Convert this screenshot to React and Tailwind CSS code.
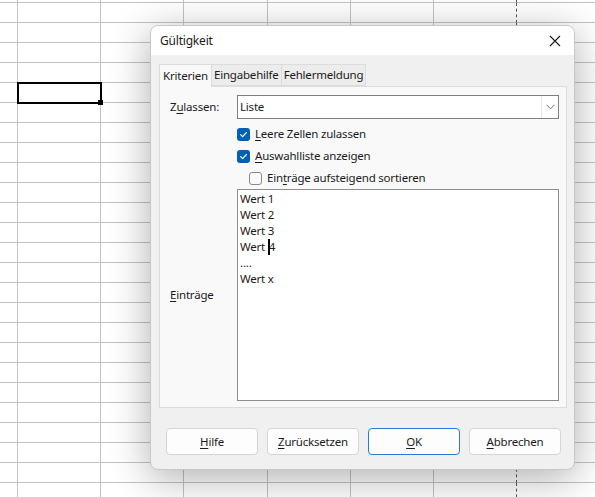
import React from "react";

const COLS = ["w-[18px]", "w-[83px]", "w-[83px]", "w-[84px]", "w-[83px]", "w-[83px]", "w-[83px]", "w-[78px]"];
const ROWS = Array.from({ length: 26 }, (_, i) => i);

function Sheet() {
  return (
    <div className="flex flex-col">
      {ROWS.map((r) => (
        <div key={r} className={"flex shrink-0 " + (r === 0 ? "h-[3px]" : "h-5")}>
          {COLS.map((w, c) => (
            <div
              key={c}
              className={
                w +
                " shrink-0 border-b border-[#c3c3c3] " +
                (c < 6 ? "border-r " : "") +
                (c === 6 ? "border-r border-r-[#555] [border-right-style:dashed] " : "") +
                (r === 5 && c === 1 ? "relative" : "")
              }
            >
              {r === 5 && c === 1 && (
                <>
                  <div className="absolute -left-px -top-px w-[85px] h-[22px] border-2 border-black" />
                  <div className="absolute -right-[3px] -bottom-[3px] w-[5px] h-[5px] bg-black" />
                </>
              )}
            </div>
          ))}
        </div>
      ))}
    </div>
  );
}

function U({ children }) {
  return <span className="underline underline-offset-2">{children}</span>;
}

function Check({ checked }) {
  return checked ? (
    <span className="w-[13px] h-[13px] rounded-[3px] bg-[#005fb8] flex items-center justify-center shrink-0">
      <svg width="9" height="9" viewBox="0 0 10 10" fill="none">
        <path d="M1.8 5.2 L4 7.3 L8.3 2.8" stroke="white" strokeWidth="1.3" strokeLinecap="round" strokeLinejoin="round" />
      </svg>
    </span>
  ) : (
    <span className="w-[13px] h-[13px] rounded-[3px] border border-[#8a8a8a] bg-[#fbfbfb] shrink-0" />
  );
}

function Btn({ children, primary }) {
  return (
    <div
      className={
        "w-[92px] h-[27px] rounded-[4px] flex items-center justify-center bg-[#fdfdfd] border " +
        (primary ? "border-[#2b7bd0]" : "border-[#d5d5d5]")
      }
    >
      {children}
    </div>
  );
}

function Dialog() {
  return (
    <div className="absolute left-[150px] top-[25px] w-[425px] h-[445px] rounded-lg border border-[#c8c8c8] bg-[#f0f0f0] shadow-[0_8px_40px_rgba(0,0,0,0.32)] overflow-hidden flex flex-col">
      <div className="h-[29px] bg-white flex items-center justify-between pl-[9px] pr-[13px] shrink-0">
        <span className="text-[12px]">Gültigkeit</span>
        <svg width="12" height="12" viewBox="0 0 12 12" fill="none">
          <path d="M1 1 L11 11 M11 1 L1 11" stroke="#1b1b1b" strokeWidth="1.1" />
        </svg>
      </div>
      <div className="flex flex-col pl-[8px] pr-[7px] pt-[9px] flex-1">
        <div className="flex h-[22px] items-stretch">
          <div className="px-[3px] flex items-center bg-[#f9f9f9] border border-b-0 border-[#dcdcdc] relative z-10 -mb-px">Kriterien</div>
          <div className="px-[2px] flex items-center bg-[#ececec] border border-l-0 border-[#dcdcdc]">Eingabehilfe</div>
          <div className="px-[2px] flex items-center bg-[#ececec] border border-l-0 border-[#dcdcdc]">Fehlermeldung</div>
        </div>
        <div className="w-[408px] h-[322px] bg-[#f9f9f9] border border-[#dcdcdc] pl-[10px] pr-[7px] pt-[8px] flex flex-col">
          <div className="flex items-center h-[24px]">
            <div className="w-[67px] shrink-0">
              Z<U>u</U>lassen:
            </div>
            <div className="flex-1 h-[24px] bg-white border border-[#7f7f7f] flex items-center justify-between">
              <span className="pl-[2px]">Liste</span>
              <div className="h-full w-[17px] border-l border-[#e6e6e6] flex items-center justify-center">
                <svg width="9" height="6" viewBox="0 0 9 6" fill="none">
                  <path d="M0.5 0.8 L4.5 4.8 L8.5 0.8" stroke="#6a6a6a" strokeWidth="1" />
                </svg>
              </div>
            </div>
          </div>
          <div className="pl-[67px] flex flex-col">
            <div className="flex items-center gap-[5px] h-[14px] mt-[8px]">
              <Check checked />
              <span><U>L</U>eere Zellen zulassen</span>
            </div>
            <div className="flex items-center gap-[5px] h-[14px] mt-[8px]">
              <Check checked />
              <span><U>A</U>uswahlliste anzeigen</span>
            </div>
            <div className="flex items-center gap-[5px] h-[14px] mt-[8px] pl-[12px]">
              <Check />
              <span>Ein<U>t</U>räge aufsteigend sortieren</span>
            </div>
          </div>
          <div className="flex mt-[4px]">
            <div className="w-[67px] shrink-0 flex items-center">
              <span><U>E</U>inträge</span>
            </div>
            <div className="flex-1 h-[212px] bg-white border border-[#8f8f8f] pl-[2px] pt-[1px] leading-[16px]">
              <div>Wert 1</div>
              <div>Wert 2</div>
              <div>Wert 3</div>
              <div className="flex items-center">
                <span className="whitespace-pre">Wert </span>
                <span className="w-[2px] h-[16px] bg-black -mr-[1px] relative z-10" />
                <span>4</span>
              </div>
              <div>....</div>
              <div>Wert x</div>
            </div>
          </div>
        </div>
        <div className="flex gap-[9px] pl-[7px] mt-[20px]">
          <Btn><U>H</U>ilfe</Btn>
          <Btn><U>Z</U>urücksetzen</Btn>
          <Btn primary><U>O</U>K</Btn>
          <Btn><U>A</U>bbrechen</Btn>
        </div>
      </div>
    </div>
  );
}

export default function App() {
  return (
    <div
      className="relative w-[595px] h-[497px] overflow-hidden bg-white text-[11.5px] tracking-[-0.2px] text-[#1b1b1b]"
      style={{ fontFamily: '"Noto Sans", "Open Sans", sans-serif' }}
    >
      <Sheet />
      <Dialog />
    </div>
  );
}
